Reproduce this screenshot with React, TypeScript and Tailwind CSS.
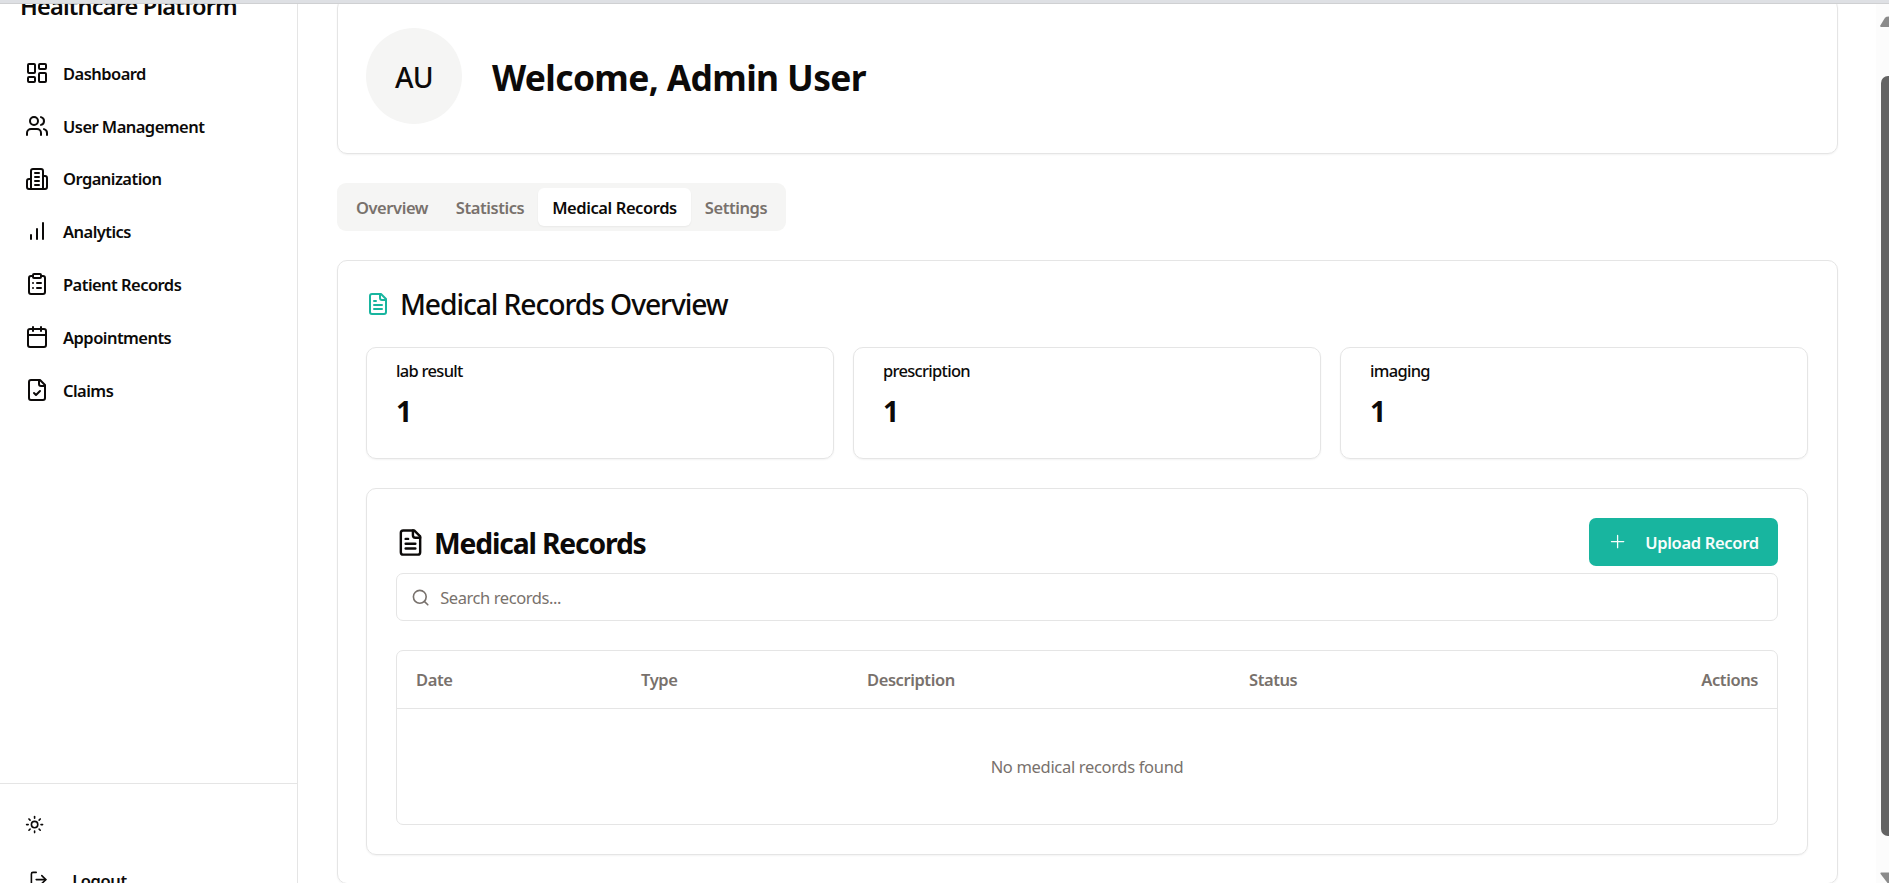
import type { ReactNode } from "react";

function Icon({ className, children, strokeWidth = 2 }: { className: string; children: ReactNode; strokeWidth?: number }) {
  return (
    <svg
      viewBox="0 0 24 24"
      fill="none"
      stroke="currentColor"
      strokeWidth={strokeWidth}
      strokeLinecap="round"
      strokeLinejoin="round"
      className={`shrink-0 ${className}`}
    >
      {children}
    </svg>
  );
}

const filePaths = (
  <>
    <path d="M15 2H6a2 2 0 0 0-2 2v16a2 2 0 0 0 2 2h12a2 2 0 0 0 2-2V7Z" />
    <path d="M14 2v4a2 2 0 0 0 2 2h4" />
  </>
);

const fileTextPaths = (
  <>
    {filePaths}
    <path d="M10 9H8" />
    <path d="M16 13H8" />
    <path d="M16 17H8" />
  </>
);

const navItems: { label: string; icon: ReactNode }[] = [
  {
    label: "Dashboard",
    icon: (
      <>
        <rect width="7" height="9" x="3" y="3" rx="1" />
        <rect width="7" height="5" x="14" y="3" rx="1" />
        <rect width="7" height="9" x="14" y="12" rx="1" />
        <rect width="7" height="5" x="3" y="16" rx="1" />
      </>
    ),
  },
  {
    label: "User Management",
    icon: (
      <>
        <path d="M16 21v-2a4 4 0 0 0-4-4H6a4 4 0 0 0-4 4v2" />
        <circle cx="9" cy="7" r="4" />
        <path d="M22 21v-2a4 4 0 0 0-3-3.87" />
        <path d="M16 3.13a4 4 0 0 1 0 7.75" />
      </>
    ),
  },
  {
    label: "Organization",
    icon: (
      <>
        <path d="M6 22V4a2 2 0 0 1 2-2h8a2 2 0 0 1 2 2v18Z" />
        <path d="M6 12H4a2 2 0 0 0-2 2v6a2 2 0 0 0 2 2h2" />
        <path d="M18 9h2a2 2 0 0 1 2 2v9a2 2 0 0 1-2 2h-2" />
        <path d="M10 6h4" />
        <path d="M10 10h4" />
        <path d="M10 14h4" />
        <path d="M10 18h4" />
      </>
    ),
  },
  {
    label: "Analytics",
    icon: (
      <>
        <path d="M12 20V10" />
        <path d="M18 20V4" />
        <path d="M6 20v-4" />
      </>
    ),
  },
  {
    label: "Patient Records",
    icon: (
      <>
        <rect width="8" height="4" x="8" y="2" rx="1" />
        <path d="M16 4h2a2 2 0 0 1 2 2v14a2 2 0 0 1-2 2H6a2 2 0 0 1-2-2V6a2 2 0 0 1 2-2h2" />
        <path d="M12 11h4" />
        <path d="M12 16h4" />
        <path d="M8 11h.01" />
        <path d="M8 16h.01" />
      </>
    ),
  },
  {
    label: "Appointments",
    icon: (
      <>
        <path d="M8 2v4" />
        <path d="M16 2v4" />
        <rect width="18" height="18" x="3" y="4" rx="2" />
        <path d="M3 10h18" />
      </>
    ),
  },
  {
    label: "Claims",
    icon: (
      <>
        {filePaths}
        <path d="m9 15 2 2 4-4" />
      </>
    ),
  },
];

const tabs = [
  { label: "Overview", size: "w-[100px]", active: false },
  { label: "Statistics", size: "w-[96px]", active: false },
  { label: "Medical Records", size: "w-[153px]", active: true },
  { label: "Settings", size: "w-[90px]", active: false },
];

const stats = [
  { label: "lab result", value: 1 },
  { label: "prescription", value: 1 },
  { label: "imaging", value: 1 },
];

function Sidebar() {
  return (
    <aside className="flex w-[298px] shrink-0 flex-col overflow-hidden border-r border-[#e5e5e5]">
      <h1 className="-mt-[12px] h-[30px] shrink-0 pl-5 text-[23.6px] leading-[29px] font-semibold tracking-[-0.84px] whitespace-nowrap">
        Healthcare Platform
      </h1>
      <nav className="mt-[27px] flex flex-col gap-[4.8px]">
        {navItems.map((item) => (
          <a key={item.label} className="flex h-12 items-center gap-[14px] pl-[25px]">
            <Icon className="size-6">{item.icon}</Icon>
            <span className="pt-[2.5px] text-[16.5px] font-semibold tracking-[-0.54px]">{item.label}</span>
          </a>
        ))}
      </nav>
      <div className="mt-auto h-[100px] shrink-0 border-t border-[#e5e5e5]">
        <div className="flex h-[81px] items-center pl-[25px]">
          <Icon className="size-[19.2px]">
            <circle cx="12" cy="12" r="4" />
            <path d="M12 2v2" />
            <path d="M12 20v2" />
            <path d="m4.93 4.93 1.41 1.41" />
            <path d="m17.66 17.66 1.41 1.41" />
            <path d="M2 12h2" />
            <path d="M20 12h2" />
            <path d="m6.34 17.66-1.41 1.41" />
            <path d="m19.07 4.93-1.41 1.41" />
          </Icon>
        </div>
        <div className="-mt-[9px] flex h-12 items-center gap-[24px] pl-[29px]">
          <Icon className="size-[19.2px]">
            <path d="M9 21H5a2 2 0 0 1-2-2V5a2 2 0 0 1 2-2h4" />
            <path d="m16 17 5-5-5-5" />
            <path d="M21 12H9" />
          </Icon>
          <span className="pt-[2px] text-[16.5px] font-semibold tracking-[-0.4px]">Logout</span>
        </div>
      </div>
    </aside>
  );
}

function RecordsPanel() {
  return (
    <section className="mt-[29px] h-[367px] rounded-[10px] border border-[#e5e5e5] p-[29px] shadow-xs">
      <div className="flex h-12 items-center justify-between">
        <h3 className="flex items-center gap-[9px] text-[28.3px] leading-9 font-bold tracking-[-1.17px]">
          <Icon className="size-[29px]">{fileTextPaths}</Icon>
          <span className="pt-[2px]">Medical Records</span>
        </h3>
        <button className="flex h-12 w-[189px] items-center rounded-[7px] bg-[#18b59f] pl-[19px] text-[16.5px] font-semibold tracking-[-0.32px] whitespace-nowrap text-[#f8fdfc]">
          <svg viewBox="0 0 15 15" className="size-[19.2px] shrink-0" fill="none" stroke="currentColor" strokeLinecap="round">
            <path d="M7.5 2.7v9.6M2.7 7.5h9.6" />
          </svg>
          <span className="ml-[18px] pt-[3px]">Upload Record</span>
        </button>
      </div>
      <div className="mt-[7px] flex h-12 items-center gap-[10px] rounded-[7px] border border-[#e5e5e5] pl-[14px] text-[#78716c]">
        <Icon className="mt-px size-[19.2px]">
          <circle cx="11" cy="11" r="8" />
          <path d="m21 21-4.3-4.3" />
        </Icon>
        <span className="pt-[2px] text-[16.5px] tracking-[-0.42px]">Search records...</span>
      </div>
      <div className="mt-[29px] h-[175px] rounded-[7px] border border-[#e5e5e5] text-[16.5px] text-[#78716c]">
        <div className="grid h-[58px] grid-cols-[225px_226px_381px_1fr] items-center border-b border-[#e5e5e5] pt-px font-semibold tracking-[-0.42px]">
          <span className="pl-[19px]">Date</span>
          <span className="pl-[19px]">Type</span>
          <span className="pl-[19px]">Description</span>
          <div className="flex justify-between pr-[19px] pl-5">
            <span>Status</span>
            <span>Actions</span>
          </div>
        </div>
        <p className="flex h-[115px] items-center justify-center pt-[2px] tracking-[-0.32px]">No medical records found</p>
      </div>
    </section>
  );
}

function Scrollbar() {
  return (
    <div className="flex w-[13px] shrink-0 flex-col items-end overflow-hidden bg-[#fcfcfc]">
      <svg viewBox="0 0 9 72" className="h-[72px] w-[9px] shrink-0" fill="#8b8b8b">
        <path d="M.3 21.5 5 13.8Q6 12.5 9 12.5V23H1Q0 23 .3 21.5Z" />
      </svg>
      <div className="h-[760px] w-2 shrink-0 rounded-tl-[7px] rounded-bl-[7px] bg-[#636363]" />
      <svg viewBox="0 0 9 47" className="h-[47px] w-[9px] shrink-0" fill="#8b8b8b">
        <path d="M1 36.5H9V47H7.5L.6 38Q0 36.5 1 36.5Z" />
      </svg>
    </div>
  );
}

export default function App() {
  return (
    <div className="flex h-[883px] flex-col overflow-hidden bg-white text-[#0c0a09] [font-family:'Noto_Sans','Open_Sans',sans-serif]">
      <div className="h-1 shrink-0 border-b border-[#cfd0d2] bg-[#dee0e4]" />
      <div className="flex h-[879px] shrink-0">
        <Sidebar />
        <main className="min-w-0 flex-1 overflow-hidden pr-[38px] pl-[39px]">
          <section className="-mt-[6px] flex h-[156px] gap-[30px] rounded-[10px] border border-[#e5e5e5] pt-[29px] pl-[28px] shadow-xs">
            <div className="flex size-24 items-center justify-center rounded-full bg-[#f5f5f4] text-[28.3px] font-medium tracking-[-0.6px]">
              <span className="pt-[2px]">AU</span>
            </div>
            <h2 className="flex h-24 items-center pt-[4px] text-[35.4px] font-bold tracking-[-0.64px]">Welcome, Admin User</h2>
          </section>
          <div className="mt-[29px] flex h-12 w-[449px] rounded-[9px] bg-[#f5f5f4] p-[5px] text-[16.5px] font-semibold tracking-[-0.42px] whitespace-nowrap">
            {tabs.map((tab) => (
              <button
                key={tab.label}
                className={`flex shrink-0 items-center justify-center rounded-[6px] pt-[3px] ${tab.size} ${
                  tab.active ? "bg-white text-[#0c0a09] shadow-xs" : "text-[#78716c]"
                }`}
              >
                {tab.label}
              </button>
            ))}
          </div>
          <section className="mt-[29px] h-[624px] rounded-[10px] border border-[#e5e5e5] pt-[28px] pr-[29px] pl-[28px] shadow-xs">
            <h2 className="flex h-[30px] items-center gap-[10px] text-[28.3px] font-medium tracking-[-1.11px]">
              <Icon className="size-6 text-[#18b59f]">{fileTextPaths}</Icon>
              Medical Records Overview
            </h2>
            <div className="mt-[28px] grid grid-cols-3 gap-[19px]">
              {stats.map((stat) => (
                <div key={stat.label} className="h-[112px] rounded-[10px] border border-[#e5e5e5] pt-[11px] pl-[29px] shadow-xs">
                  <div className="h-6 text-[16.5px] leading-6 font-medium tracking-[-0.7px]">{stat.label}</div>
                  <div className="mt-[10px] text-[28.3px] leading-9 font-bold">{stat.value}</div>
                </div>
              ))}
            </div>
            <RecordsPanel />
          </section>
        </main>
        <Scrollbar />
      </div>
    </div>
  );
}
